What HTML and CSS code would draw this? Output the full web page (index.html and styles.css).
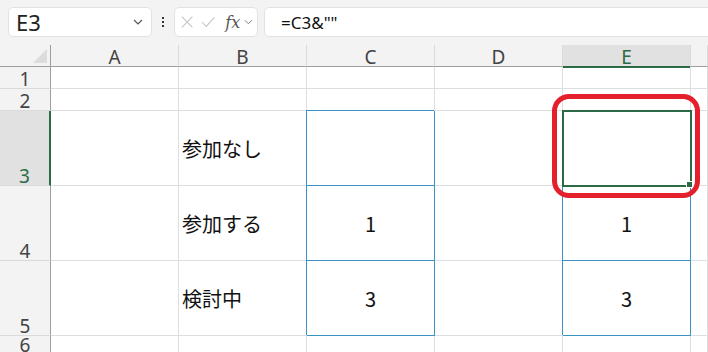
FILE: index.html
```html
<!DOCTYPE html>
<html>
<head>
  <title>Sheet</title>
  <link rel="stylesheet" href="styles.css">
</head>
<body>
  <div class="toolbar">
    <div class="name-box">
      <span class="name-text">E3</span>
      <svg class="chevron" width="10" height="6" viewBox="0 0 10 6"><path d="M1 1 L5 5 L9 1" fill="none" stroke="#555" stroke-width="1.2"/></svg>
    </div>
    <div class="dots"><span></span><span></span><span></span></div>
    <div class="fx-box">
      <svg width="14" height="14" viewBox="0 0 14 14"><path d="M1 1 L13 13 M13 1 L1 13" stroke="#c4c4c4" stroke-width="1.2"/></svg>
      <svg width="16" height="14" viewBox="0 0 16 14"><path d="M1 7 L6 12 L15 2" fill="none" stroke="#c4c4c4" stroke-width="1.2"/></svg>
      <span class="fx">fx</span>
      <svg class="chevron" width="10" height="6" viewBox="0 0 10 6"><path d="M1 1 L5 5 L9 1" fill="none" stroke="#777" stroke-width="1.1"/></svg>
    </div>
    <div class="formula-box">=C3&amp;""</div>
  </div>

  <div class="sheet">
    <div class="corner"><span class="corner-tri"></span></div>
    <div class="col-head">A</div>
    <div class="col-head">B</div>
    <div class="col-head">C</div>
    <div class="col-head">D</div>
    <div class="col-head active">E</div>
    <div class="col-head"></div>

    <div class="row-head">1</div>
    <div class="cell"></div><div class="cell"></div><div class="cell"></div><div class="cell"></div><div class="cell"></div><div class="cell"></div>

    <div class="row-head">2</div>
    <div class="cell"></div><div class="cell"></div><div class="cell"></div><div class="cell"></div><div class="cell"></div><div class="cell"></div>

    <div class="row-head active">3</div>
    <div class="cell"></div>
    <div class="cell label">参加なし</div>
    <div class="cell num boxed"></div>
    <div class="cell"></div>
    <div class="cell num selected">
      <span class="fill-handle"></span>
      <span class="mark"></span>
    </div>
    <div class="cell"></div>

    <div class="row-head">4</div>
    <div class="cell"></div>
    <div class="cell label">参加する</div>
    <div class="cell num boxed">1</div>
    <div class="cell"></div>
    <div class="cell num boxed">1</div>
    <div class="cell"></div>

    <div class="row-head">5</div>
    <div class="cell"></div>
    <div class="cell label">検討中</div>
    <div class="cell num boxed">3</div>
    <div class="cell"></div>
    <div class="cell num boxed">3</div>
    <div class="cell"></div>

    <div class="row-head">6</div>
    <div class="cell"></div><div class="cell"></div><div class="cell"></div><div class="cell"></div><div class="cell"></div><div class="cell"></div>
  </div>
</body>
</html>
```

FILE: styles.css
```css
body {
  margin: 0;
  width: 708px;
  height: 352px;
  overflow: hidden;
  background: #f3f3f3;
  font-family: 'Noto Sans', 'Noto Sans CJK JP', sans-serif;
}

/* formula bar */
.toolbar {
  display: flex;
  align-items: flex-start;
  height: 45px;
  padding: 7px 0 0 8px;
  box-sizing: border-box;
}

.name-box,
.fx-box,
.formula-box {
  height: 30px;
  box-sizing: border-box;
  background: white;
  border: 1px solid #e2e2e2;
  border-radius: 5px;
  display: flex;
  align-items: center;
}

.name-box {
  width: 144px;
  padding: 0 8px 0 7px;
  justify-content: space-between;
}

.name-text {
  font-size: 22px;
  color: #222;
}

.dots {
  width: 22px;
  height: 30px;
  display: flex;
  flex-direction: column;
  align-items: center;
  justify-content: center;
  gap: 2px;
}

.dots span {
  width: 2px;
  height: 2px;
  background: #333;
}

.fx-box {
  width: 84px;
  padding: 0 4px 0 6px;
  gap: 8px;
}

.fx {
  font-family: 'DejaVu Serif', 'Liberation Serif', serif;
  font-style: italic;
  font-size: 16px;
  color: #555;
  margin-left: 2px;
  margin-right: -4px;
}

.formula-box {
  flex: 1;
  margin-left: 6px;
  margin-right: -8px;
  padding-left: 16px;
  font-size: 17px;
  color: #111;
}

/* grid */
.sheet {
  display: grid;
  grid-template-columns: 51px repeat(5, 128px) 1fr;
  grid-template-rows: 22px 22px 22px 75px 75px 75px 1fr;
  height: 307px;
  background: white;
}

.corner {
  background: #f3f3f3;
  border-right: 1px solid #9e9e9e;
  border-bottom: 1px solid #9e9e9e;
  position: relative;
}

.corner-tri {
  position: absolute;
  right: 3px;
  bottom: 3px;
  width: 0;
  height: 0;
  border-left: 14px solid transparent;
  border-bottom: 14px solid #dcdcdc;
}

.col-head {
  background: #f3f3f3;
  border-right: 1px solid #dadada;
  border-bottom: 1px solid #9e9e9e;
  display: flex;
  justify-content: center;
  align-items: flex-end;
  font-size: 19px;
  line-height: 18px;
  color: #444;
}

.col-head.active {
  background: #e1e1e1;
  color: #2b6a45;
  border-bottom: 2px solid #2b6a45;
  margin-bottom: -1px;
}

.row-head {
  background: #f3f3f3;
  border-right: 1px solid #9e9e9e;
  border-bottom: 1px solid #dadada;
  display: flex;
  justify-content: center;
  align-items: flex-end;
  font-size: 19px;
  line-height: 18px;
  color: #444;
}

.row-head.active {
  background: #e1e1e1;
  color: #2b6a45;
  border-right: 2px solid #2b6a45;
}

.cell {
  border-right: 1px solid #dedede;
  border-bottom: 1px solid #dedede;
  font-family: 'Noto Sans CJK JP', sans-serif;
  font-size: 20px;
  color: #111;
  display: flex;
  align-items: center;
}

.cell.label {
  padding-left: 3px;
}

.cell.num {
  justify-content: center;
}

.cell.boxed {
  border-right-color: #3a91c4;
  border-bottom-color: #3a91c4;
  box-shadow: -1px -1px 0 #3a91c4;
}

.cell.selected {
  position: relative;
  outline: 2px solid #2b6a45;
  outline-offset: -1px;
}

.fill-handle {
  position: absolute;
  right: -3px;
  bottom: -3px;
  width: 5px;
  height: 5px;
  background: #2b6a45;
  border: 1px solid white;
}

/* red annotation ring */
.mark {
  position: absolute;
  left: -11px;
  top: -17px;
  width: 148px;
  height: 104px;
  box-sizing: border-box;
  border: 5px solid #e3202b;
  border-radius: 17px;
}
```
